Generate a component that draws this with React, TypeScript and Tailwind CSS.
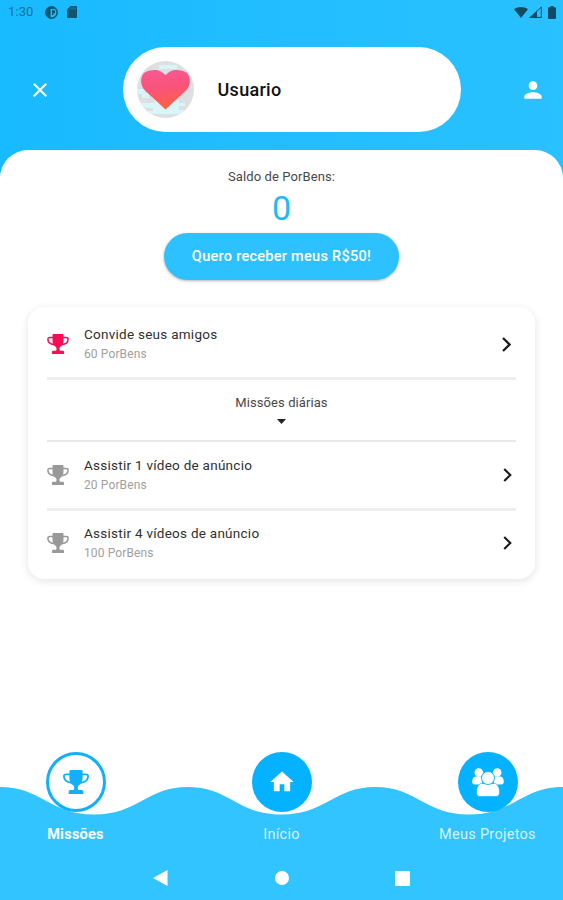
import React from "react";
import { MdClose, MdHome, MdPerson } from "react-icons/md";

function StatusBar() {
  return (
    <div className="flex h-6 items-center justify-between pl-2 pr-[7px] text-[#10556f]">
      <div className="flex items-center">
        <span className="w-[37px] text-[13px] leading-6 tracking-[0.100px] text-[#1a7396]">1:30</span>
        <svg className="h-[13px] w-[13px]" viewBox="0 0 13 13">
          <circle cx="6.5" cy="6.5" r="5.7" fill="none" stroke="currentColor" strokeWidth="1.5" />
          <path d="M1 4 4 1h5l2 2H5.500v7.500L6 12 2 10z" fill="currentColor" />
          <path d="M7 4.300h3v3H8.300V9H7z" fill="currentColor" />
        </svg>
        <svg className="ml-[9px] h-3 w-[10px]" viewBox="0 0 10 12">
          <path d="M3.500 0H9a1 1 0 0 1 1 1v10a1 1 0 0 1-1 1H1a1 1 0 0 1-1-1V3.500z" fill="currentColor" />
          <path d="M4 1.500v2M6 1.500v2M8 1.500v2" stroke="#1cbaff" strokeWidth="0.500" />
        </svg>
      </div>
      <div className="flex items-center text-[#0d4c63]">
        <svg className="h-[11px] w-[14px]" viewBox="0 0 14 11">
          <path d="M0 2.300C4-.7 10-.7 14 2.300L7 11z" fill="currentColor" />
        </svg>
        <svg className="ml-[1px] h-3 w-[13px]" viewBox="0 0 13 12">
          <path d="M1.500 11.400 12.300 1v10.400z" fill="none" stroke="currentColor" strokeWidth="1" />
          <path d="M0 12 8 4.500V12z" fill="currentColor" />
        </svg>
        <svg className="ml-[6px] h-[13px] w-2" viewBox="0 0 8 13">
          <path d="M2.500 0h3v1.300H7a1 1 0 0 1 1 1V12a1 1 0 0 1-1 1H1a1 1 0 0 1-1-1V2.300a1 1 0 0 1 1-1h1.500z" fill="currentColor" />
        </svg>
      </div>
    </div>
  );
}

function Trophy({ className }: { className: string }) {
  return (
    <svg className={className} viewBox="0 0 26 24">
      <path
        d="M7 4.300H3.200C1.500 4.300.9 5.100.9 6.300c0 3.500 3 5.900 7.600 6.500M19 4.300h3.800c1.700 0 2.300.8 2.300 2 0 3.500-3 5.900-7.600 6.500"
        fill="none"
        stroke="currentColor"
        strokeWidth="1.800"
      />
      <path
        d="M8 0h10c1 0 1.600.6 1.600 1.600V8c0 3.300-1.200 5.500-3.300 7-1.100.8-1.500 1.500-1.500 2.500v1c0 1 .6 1.600 1.700 1.600h2c1 0 1.800.7 1.800 1.700v1.600c0 .4-.2.600-.6.600h-13.400c-.4 0-.6-.2-.6-.6v-1.600c0-1 .8-1.700 1.800-1.700h2c1.100 0 1.700-.6 1.700-1.600v-1c0-1-.4-1.700-1.500-2.500-2.100-1.500-3.300-3.700-3.300-7V1.600C6.400.6 7 0 8 0z"
        fill="currentColor"
      />
    </svg>
  );
}

function Avatar() {
  return (
    <svg className="h-[57px] w-[57px]" viewBox="0 0 57 57">
      <defs>
        <linearGradient id="heart" x1="0" y1="0" x2="0.150" y2="1">
          <stop offset="0" stopColor="#f65a94" />
          <stop offset="0.500" stopColor="#f9537b" />
          <stop offset="1" stopColor="#ff6045" />
        </linearGradient>
        <clipPath id="disc">
          <circle cx="28.500" cy="28.500" r="28.500" />
        </clipPath>
      </defs>
      <g clipPath="url(#disc)">
        <rect width="57" height="57" fill="#dedfe2" />
        <path d="M22 4h18v4H20V8h2zM0 28h8v4h4v5H5v-4H0zM4 42h14v-3h24v3h6v3h-6v4h5v4H8v-3h8v-3H4z" fill="#d9f6f7" />
      </g>
      <path d="M28.500 48.500 8 29.500C3 24.500 3 16 7 12c4-3.500 14-4 17-1.500l4.500 3.500 4.500-3.500c3-2.500 13-2 17 1.500 4 4 4 12.500-1 17.500z" fill="url(#heart)" />
    </svg>
  );
}

function Chevron({ small }: { small?: boolean }) {
  return (
    <svg className={small ? "mr-[4px] h-[14px] w-[9px]" : "mr-[5px] h-[15px] w-[9px]"} viewBox="0 0 9 15">
      <path d="M1 1 7.500 7.500 1 14" fill="none" stroke="#1c1c1c" strokeWidth="2.300" />
    </svg>
  );
}

function Mission({ title, reward, active }: { title: string; reward: string; active?: boolean }) {
  return (
    <div className="flex flex-1 items-center">
      <Trophy className={active ? "h-5 w-[22px] text-[#fb0d55]" : "h-5 w-[22px] text-[#999999]"} />
      <div className="ml-[15px] flex-1 pt-px">
        <div className="text-[13.500px] leading-[19px] tracking-[0.260px] text-[#303030]">{title}</div>
        <div className="pt-px text-[12px] leading-[19px] tracking-[0.120px] text-[#a0a0a0]">{reward}</div>
      </div>
      <Chevron small={!active} />
    </div>
  );
}

function Group() {
  return (
    <svg className="h-[30px] w-8" viewBox="0 0 32 30" fill="#fff">
      <circle cx="6.800" cy="5.500" r="4.300" />
      <circle cx="25.200" cy="5.500" r="4.300" />
      <path d="M4 9.500h6v8H3c-2.500 0-3-1.500-2.700-4C.6 11 2 9.500 4 9.500zM28 9.500h-6v8h7c2.500 0 3-1.500 2.700-4-.3-2.500-1.700-4-3.700-4z" />
      <path d="M8.500 16.500h15c3 1.500 4 5 4 8.500 0 3.500-1.500 4.500-4 4.500h-15c-2.500 0-4-1-4-4.500 0-3.500 1-7 4-8.500z" stroke="#04b0fc" strokeWidth="0.600" />
      <circle cx="16" cy="11" r="6.500" stroke="#04b0fc" strokeWidth="0.900" />
    </svg>
  );
}

function Tab({ label, active, children }: { label: string; active?: boolean; children: React.ReactNode }) {
  return (
    <div className="flex w-[110px] flex-col items-center">
      <div
        className={
          active
            ? "flex h-[60px] w-[60px] items-center justify-center rounded-full border-[3px] border-[#12b0fa] bg-white text-[#12b0fa]"
            : "flex h-[60px] w-[60px] items-center justify-center rounded-full bg-[#04b2ff] text-white"
        }
      >
        {children}
      </div>
      <span
        className={
          active
            ? "mt-[13px] whitespace-nowrap text-[14.500px] font-bold leading-5 tracking-[0.250px] text-white"
            : "mt-[13px] whitespace-nowrap text-[14.500px] leading-5 tracking-[0.280px] text-[#d8f3ff]"
        }
      >
        {label}
      </span>
    </div>
  );
}

export default function App() {
  return (
    <div className="flex h-[900px] w-[563px] flex-col overflow-hidden bg-linear-to-r from-[#18baff] to-[#29c1ff] font-['Roboto',sans-serif]">
      <StatusBar />
      <header className="flex h-[126px] items-start justify-between pl-[28px] pr-[17px] pt-[23px]">
        <MdClose className="mt-[31px] h-6 w-6 text-white" />
        <div className="ml-[11px] flex h-[85px] w-[338px] items-center rounded-full bg-white pl-3.5">
          <Avatar />
          <span className="ml-[24px] text-[18px] font-medium leading-6 tracking-[0.300px] text-[#111111]">Usuario</span>
        </div>
        <MdPerson className="mt-[30px] h-[26px] w-[26px] text-white" />
      </header>

      <main className="flex flex-1 flex-col items-center rounded-t-[28px] bg-white pt-[17px]">
        <div className="text-[13px] leading-5 tracking-[0.100px] text-[#484848]">Saldo de PorBens:</div>
        <div className="mt-[3px] text-[34px] leading-9 text-[#22b9f8]">0</div>
        <button className="mt-[7px] h-[47px] w-[235px] rounded-full bg-[#2dc2ff] text-[14.500px] font-medium tracking-[0.280px] text-white shadow-[0_1px_3px_rgba(0,0,0,0.3)]">
          Quero receber meus R$50!
        </button>
        <section className="mt-[27px] flex h-[272px] w-[507px] flex-col rounded-2xl bg-white px-[19px] shadow-[0_2px_9px_rgba(0,0,0,0.11)]">
          <div className="flex h-[73px] border-b-[3px] border-[#eeeeee] pt-1">
            <Mission title="Convide seus amigos" reward="60 PorBens" active />
          </div>
          <div className="flex h-[62px] flex-col items-center border-b-[2px] border-[#e8e8e8] pt-[13px]">
            <span className="text-[13px] leading-5 tracking-[0.080px] text-[#484848]">Missões diárias</span>
            <svg className="mt-[6px] h-[5px] w-[9px]" viewBox="0 0 9 5">
              <path d="M0 0h9L4.500 5z" fill="#222" />
            </svg>
          </div>
          <div className="flex h-[69px] border-b-[3px] border-[#eeeeee] pb-px">
            <Mission title="Assistir 1 vídeo de anúncio" reward="20 PorBens" />
          </div>
          <div className="flex h-[64px]">
            <Mission title="Assistir 4 vídeos de anúncio" reward="100 PorBens" />
          </div>
        </section>
      </main>

      <footer className="relative h-[148px] bg-white">
        <svg className="absolute left-0 top-[34px] h-[114px] w-[563px]" viewBox="0 0 563 114">
          <path
            d="M0 1C42 1 49 28.500 94 28.500S146 1 187.700 1 236.700 28.500 281.500 28.500 333.500 1 375.300 1 424 28.500 469 28.500 521 1 563 1V114H0z"
            fill="#31c4ff"
          />
        </svg>
        <div className="relative flex justify-between px-[20.500px]">
          <Tab label="Missões" active>
            <Trophy className="h-6 w-[26px]" />
          </Tab>
          <Tab label="Início">
            <MdHome className="h-[28px] w-[28px]" />
          </Tab>
          <Tab label="Meus Projetos">
            <Group />
          </Tab>
        </div>
        <div className="relative mt-[25px] flex items-center justify-between px-[153px]">
          <svg className="h-4 w-[15px]" viewBox="0 0 15 16">
            <path d="M14.500 0v16L0 8z" fill="#fff" />
          </svg>
          <div className="h-[14px] w-[14px] rounded-full bg-white" />
          <div className="h-[15px] w-[15px] rounded-[1px] bg-white" />
        </div>
      </footer>
    </div>
  );
}
